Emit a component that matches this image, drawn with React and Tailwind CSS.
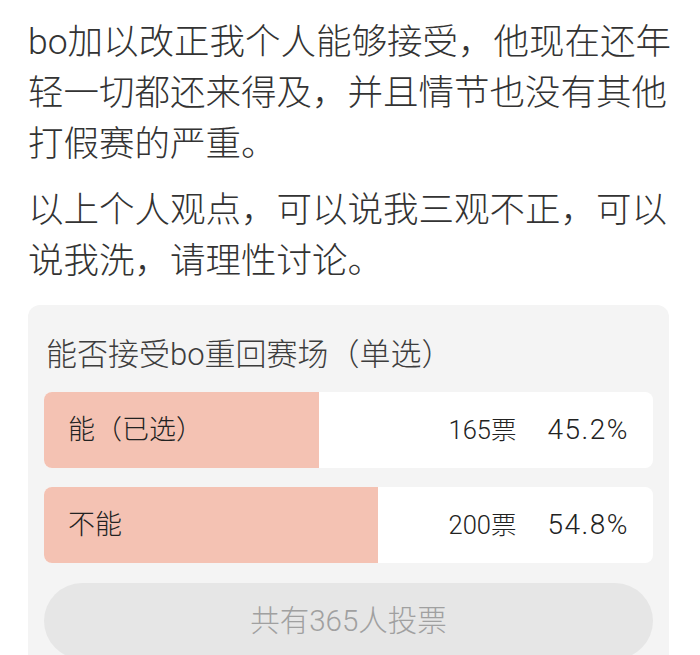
const options = [
  { label: "能（已选）", votes: "165票", pct: 45.2 },
  { label: "不能", votes: "200票", pct: 54.8 },
];

export default function App() {
  return (
    <div
      className="h-[655px] overflow-hidden bg-white text-[#333] px-7 pt-[17px] font-light"
      style={{ fontFamily: 'Roboto, "Noto Sans CJK SC", sans-serif' }}
    >
      <p className="text-[35.5px] leading-[51px]">
        bo加以改正我个人能够接受，他现在还年轻一切都还来得及，并且情节也没有其他打假赛的严重。
      </p>
      <p className="mt-[15px] text-[35.5px] leading-[51px]">
        以上个人观点，可以说我三观不正，可以说我洗，请理性讨论。
      </p>

      <div className="mt-[18px] mr-[3px] rounded-xl bg-[#f4f4f4] px-4 pt-[30px] pb-6">
        <h2 className="text-[31px] leading-[40px] text-[#3d3d3d] pl-0.5">
          能否接受bo重回赛场（单选）
        </h2>

        <div className="mt-[17px] flex flex-col gap-[19px]">
          {options.map((o) => (
            <div
              key={o.label}
              className="relative h-[76px] overflow-hidden rounded-lg bg-white"
            >
              <div
                className="absolute inset-y-0 left-0 bg-[#f4c2b3]"
                style={{ width: `${o.pct}%` }}
              />
              <div className="relative flex h-full items-center pl-6 pr-[24px] text-[#222]">
                <span className="text-[27px]">{o.label}</span>
                <span className="ml-auto text-[25.5px]">{o.votes}</span>
                <span className="ml-[31px] text-[28px] tracking-[1.5px]">{o.pct}%</span>
              </div>
            </div>
          ))}
        </div>

        <div className="mt-5 flex h-[76px] items-center justify-center rounded-full bg-[#e6e6e6]">
          <span className="text-[29.5px] text-[#a0a0a0]">共有365人投票</span>
        </div>
      </div>
    </div>
  );
}
